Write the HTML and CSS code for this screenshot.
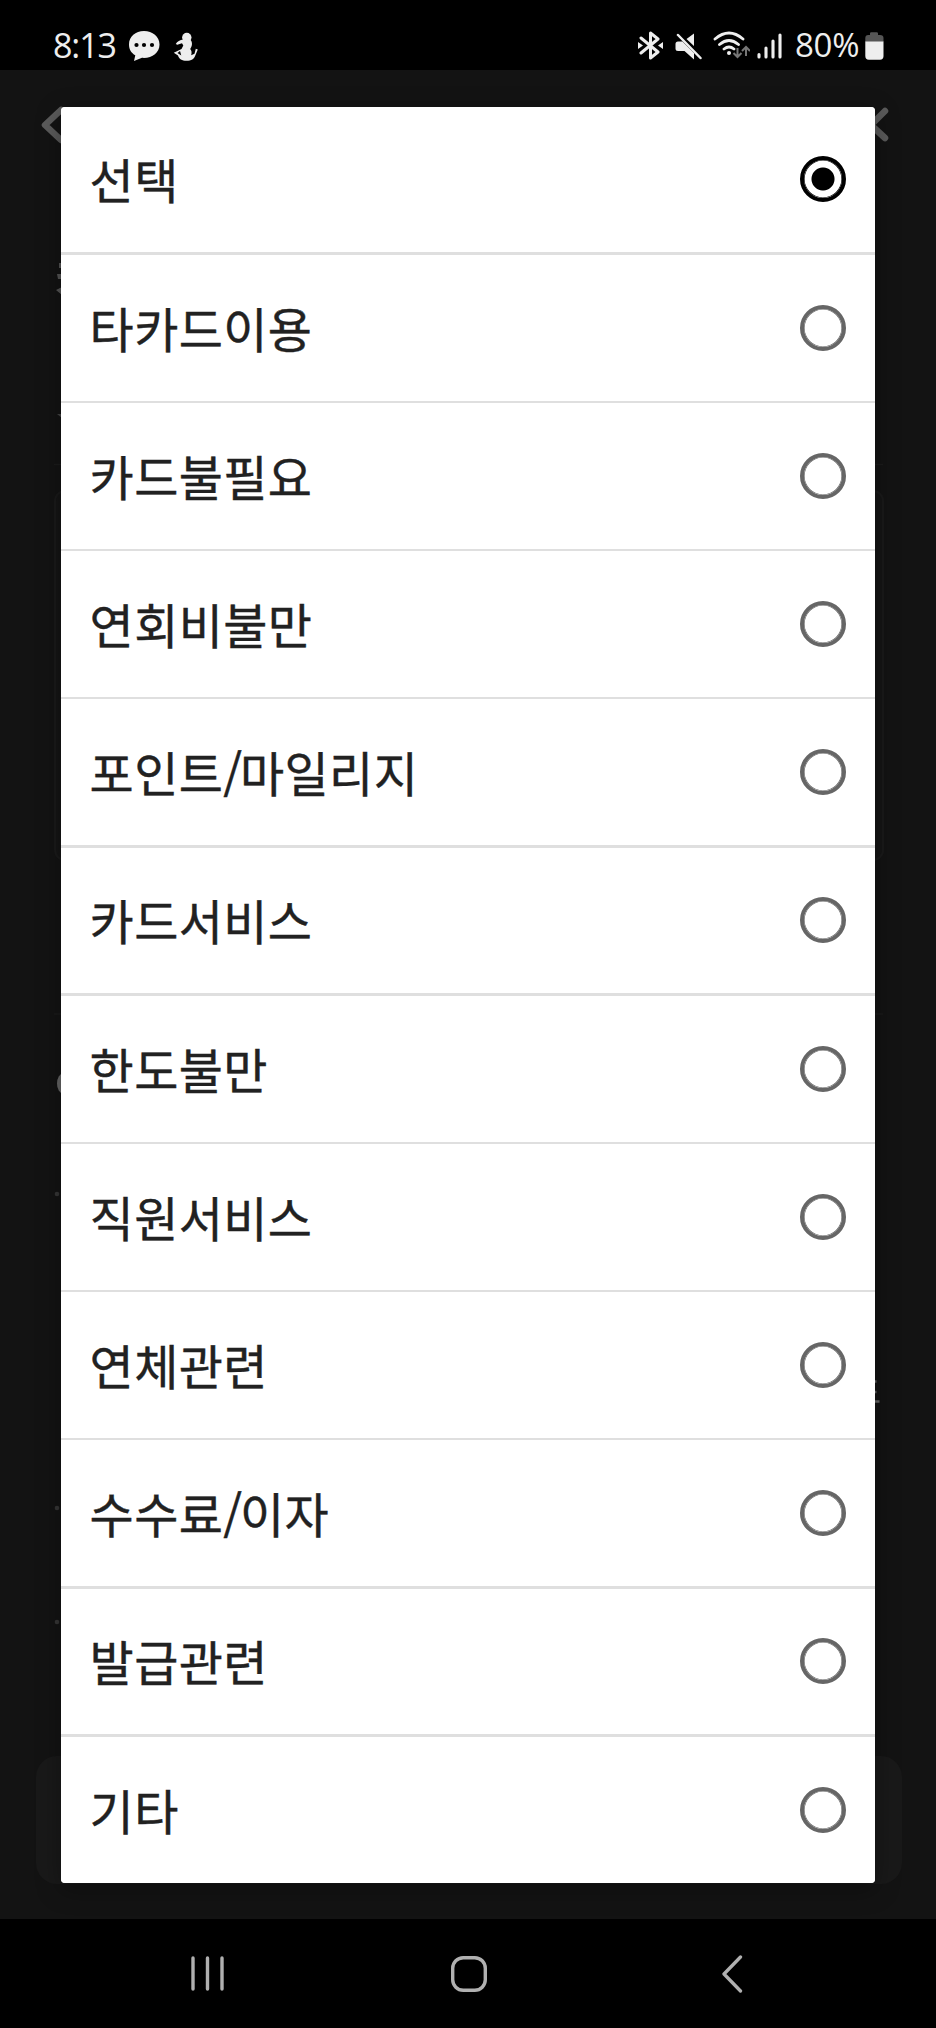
FILE: index.html
```html
<!DOCTYPE html>
<html lang="ko">
<head>
<meta charset="utf-8">
<title>선택</title>
<link rel="stylesheet" href="styles.css">
</head>
<body>
<div class="screen">
  <header class="status">
    <div class="status-left">
      <span class="clock">8:13</span>
      <svg class="chat" width="32" height="32" viewBox="0 0 32 32"><path d="M16 1C7.500 1 1 6.500 1 14.500c0 5 2.300 8.500 6.300 10.800L6 31l8-3.200c9.500.8 17.500-4.500 17.500-13.300C31.500 6.500 24.500 1 16 1z" fill="#eee"/><g fill="#000"><circle cx="8.500" cy="15" r="2.100"/><circle cx="16" cy="15" r="2.100"/><circle cx="24" cy="15" r="2.100"/></g></svg>
      <svg class="figure" width="26" height="30" viewBox="0 0 26 30"><g fill="#eee"><circle cx="13.800" cy="5.500" r="4.700"/><path d="M10.500 7.500C7 8 4 9.500 2.800 12l1.500.8L9 11.200l1.300 2.300L8.500 17 .8 20.800 5 23.500c1 3.500 4 5.300 8.500 5.300 5 0 7.500-1.500 9-5.800L24.800 17.500l-2-.8-1.300 5-3.300 1.500c.8-3 .3-4.700-1-6.200 2.300-3 2.500-7 0-9.500z"/></g><path d="M7 19l1.300 4.500L4.500 21z" fill="#000"/></svg>
    </div>
    <div class="status-right">
      <svg class="bt" width="26" height="29" viewBox="0 0 26 29"><path d="M3 7l17 14-7.500 6V2L20 8 3 22" fill="none" stroke="#eee" stroke-width="3" stroke-linejoin="round" stroke-linecap="round"/><path d="M0 11l5 3.500L0 18zM25 11l-5 3.500 5 3.500z" fill="#eee"/></svg>
      <svg class="mute" width="27" height="27" viewBox="0 0 27 27"><path d="M3 8.500h4.500L19 20v6.500L9.500 18H3Q.5 18 .5 15.500V11Q.5 8.500 3 8.500zM11.500 6L19 .5V13z" fill="#eee"/><path d="M3 2l22.500 23" stroke="#eee" stroke-width="2.500" stroke-linecap="round"/></svg>
      <svg class="wifi" width="37" height="28" viewBox="0 0 37 28"><g fill="none" stroke="#eee" stroke-width="2.800" stroke-linecap="round"><path d="M2 8Q16-4 30 8M6.500 13.500q9.500-8 19 0M11 18q5-4 10 0"/></g><circle cx="16" cy="22" r="2" fill="#eee"/><g fill="none" stroke="#777" stroke-width="2"><path d="M24.500 17v9m-4-4l4 4 4-4M33 25v-9m-4 4l4-4 4 4"/></g></svg>
      <svg class="signal" width="25" height="26" viewBox="0 0 25 26"><path d="M2 21.500V24M9 15v9M16 8v16M23 2v22" stroke="#eee" stroke-width="3.100" stroke-linecap="round"/></svg>
      <span class="percent">80%</span>
      <svg class="battery" width="19" height="28" viewBox="0 0 19 28"><path d="M5 3V1.500Q5 .3 6.300.3h5.400Q13 .3 13 1.500V3h2q3.500 0 3.500 3v4H.3V6q0-3 3-3z" fill="#555"/><path d="M.3 9.500h18.200V24q0 3.700-3.500 3.700H3.800Q.3 27.700.3 24z" fill="#eee"/></svg>
    </div>
  </header>

  <main class="page">
    <svg class="backdrop" width="936" height="1849" viewBox="0 70 936 1849">
      <g fill="none" stroke="#5b5b5b" stroke-width="6.500" stroke-linecap="round" stroke-linejoin="round"><path d="M61 110L45 125l16 15M885 111l-14 14 14 13"/></g>
      <rect x="36" y="1756" width="866" height="128" rx="21" fill="#191919"/>
      <rect x="55" y="491" width="828" height="369" rx="10" fill="#151515" stroke="#1a1a1a" stroke-width="2"/>
      <path d="M54 464.500h829M54 1014h829" stroke="#1b1b1b" stroke-width="1.500"/>
      <path d="M59 263h3v5h-3zM57 274h5v5h-4zM62 287v8l-6-5z" fill="#555"/>
      <path d="M57 414h5v4z" fill="#444"/>
      <ellipse cx="63" cy="1083.500" rx="6" ry="10" fill="#666"/>
      <g fill="#363636"><circle cx="57" cy="1194" r="2.300"/><circle cx="57" cy="1508" r="2.300"/><circle cx="57" cy="1622" r="2.300"/></g>
      <path d="M874 1381.500h2.500M874 1392h2.500M874 1401.500h5.500" stroke="#666" stroke-width="2.400"/>
    </svg>
    <ul class="options">
      <li class="option"><span class="label">선택</span><i class="radio checked"></i></li>
      <li class="option"><span class="label">타카드이용</span><i class="radio"></i></li>
      <li class="option"><span class="label">카드불필요</span><i class="radio"></i></li>
      <li class="option"><span class="label">연회비불만</span><i class="radio"></i></li>
      <li class="option"><span class="label">포인트<span class="slash">/</span>마일리지</span><i class="radio"></i></li>
      <li class="option"><span class="label">카드서비스</span><i class="radio"></i></li>
      <li class="option"><span class="label">한도불만</span><i class="radio"></i></li>
      <li class="option"><span class="label">직원서비스</span><i class="radio"></i></li>
      <li class="option"><span class="label">연체관련</span><i class="radio"></i></li>
      <li class="option"><span class="label">수수료<span class="slash">/</span>이자</span><i class="radio"></i></li>
      <li class="option"><span class="label">발급관련</span><i class="radio"></i></li>
      <li class="option"><span class="label">기타</span><i class="radio"></i></li>
    </ul>
  </main>

  <nav class="nav">
    <svg width="34" height="36" viewBox="0 0 34 36"><path d="M3 2v31M17.500 2v31M32 2v31" stroke="#b0b0b0" stroke-width="3.400" stroke-linecap="round"/></svg>
    <svg class="home" width="38" height="38" viewBox="0 0 38 38"><rect x="2.700" y="2.700" width="32.600" height="32.600" rx="10.500" fill="none" stroke="#b0b0b0" stroke-width="3.400"/></svg>
    <svg width="22" height="38" viewBox="0 0 22 38"><path d="M19.500 2L3 19l16.500 17" fill="none" stroke="#b0b0b0" stroke-width="3.300" stroke-linecap="round" stroke-linejoin="round"/></svg>
  </nav>
</div>
</body>
</html>
```
FILE: styles.css
```css
* { box-sizing: border-box; }
body { margin: 0; background: #000; }
svg { display: block; flex: none; }

.screen {
  width: 936px;
  height: 2028px;
  display: flex;
  flex-direction: column;
  overflow: hidden;
  font-family: "Noto Sans CJK KR", sans-serif;
}

.status {
  height: 70px;
  padding: 20px 52px 0 53px;
  display: flex;
  justify-content: space-between;
  color: #eee;
  font-family: "Open Sans", "Noto Sans", sans-serif;
}
.status-left, .status-right { display: flex; align-items: flex-start; height: 50px; }
.clock, .percent { font-size: 34px; line-height: 50px; white-space: nowrap; }
.clock { width: 64px; letter-spacing: -1.1px; }
.percent { width: 66px; font-size: 33px; margin-left: 13px; letter-spacing: -0.3px; }
.chat { margin: 10px 0 0 11px; }
.figure { margin: 12px 0 0 13px; }
.bt { margin-top: 11px; }
.mute { margin: 13px 0 0 11px; }
.wifi { margin: 11px 0 0 11px; }
.signal { margin: 13px 0 0 7px; }
.battery { margin: 12px 0 0 4px; }

.page {
  height: 1849px;
  padding: 36.500px 60.600px;
  position: relative;
  background: #131313;
}
.backdrop { position: absolute; left: 0; top: 0; }

.options {
  position: relative;
  margin: 0;
  padding: 0;
  width: 814.600px;
  height: 1776px;
  list-style: none;
  display: flex;
  flex-direction: column;
  gap: 2.400px;
  background: #dfdfdf;
  border-radius: 4px;
  overflow: hidden;
  box-shadow: 0 6px 24px rgba(0, 0, 0, .35);
}
.option {
  flex: 1;
  display: flex;
  align-items: center;
  justify-content: space-between;
  padding: 0 29px;
  background: #fff;
  color: #212121;
  font-size: 48px;
  line-height: 70px;
}
.label {
  padding-bottom: 2px;
  letter-spacing: 0.400px;
  -webkit-text-stroke: 0.400px #212121;
}
.slash { letter-spacing: -2.200px; }
.radio {
  width: 46px;
  height: 46px;
  border: 4px solid #666;
  border-radius: 50%;
  box-shadow: inset 0 0 0 0.600px #666;
}
.radio.checked {
  border-color: #000;
  box-shadow: inset 0 0 0 0.600px #000;
  background: radial-gradient(circle, #000 11px, #fff 12px);
}

.nav {
  height: 109px;
  display: flex;
  align-items: center;
  padding: 0 193px 0 190px;
  justify-content: space-between;
  background: #000;
}
.home { margin-left: -6.400px; }
```
